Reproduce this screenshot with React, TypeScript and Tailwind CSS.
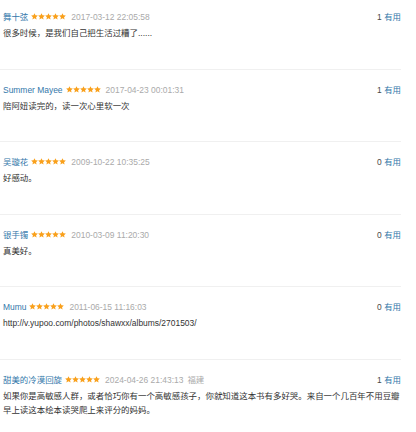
import React from 'react';

type Comment = {
  name: string;
  time: string;
  location?: string;
  votes: number;
  content: string;
};

const comments: Comment[] = [
  { name: '舞十弦', time: '2017-03-12 22:05:58', votes: 1, content: '很多时候，是我们自己把生活过糟了......' },
  { name: 'Summer Mayee', time: '2017-04-23 00:01:31', votes: 1, content: '陪阿妞读完的，读一次心里软一次' },
  { name: '吴璇花', time: '2009-10-22 10:35:25', votes: 0, content: '好感动。' },
  { name: '银手镯', time: '2010-03-09 11:20:30', votes: 0, content: '真美好。' },
  { name: 'Mumu', time: '2011-06-15 11:16:03', votes: 0, content: 'http://v.yupoo.com/photos/shawxx/albums/2701503/' },
  {
    name: '甜美的冷漠回旋',
    time: '2024-04-26 21:43:13',
    location: '福建',
    votes: 1,
    content:
      '如果你是高敏感人群，或者恰巧你有一个高敏感孩子，你就知道这本书有多好哭。来自一个几百年不用豆瓣早上读这本绘本读哭爬上来评分的妈妈。',
  },
];

const Star: React.FC = () => (
  <svg viewBox="1 1.5 22 21" className="w-[7px] h-[7px]">
    <path
      d="M12 1.5l3.1 6.9 7.4.7-5.6 5 1.7 7.4L12 17.6l-6.6 3.9 1.7-7.4-5.6-5 7.4-.7z"
      fill="#f9a01b"
    />
  </svg>
);

const Stars: React.FC = () => (
  <span className="inline-flex items-center mb-[1px]">
    <Star />
    <Star />
    <Star />
    <Star />
    <Star />
  </span>
);

const CommentItem: React.FC<{ c: Comment }> = ({ c }) => (
  <div className="border-b border-[#f0f0f0] pt-[13px] pb-[28px]">
    <div className="flex items-center justify-between leading-[14px] pl-[3px]">
      <div className="flex items-center">
        <span className="text-[#3377aa]">{c.name}</span>
        <span className="ml-[3px] mr-[5px] flex items-center">
          <Stars />
        </span>
        <span className="text-[#aaaaaa]">{c.time}</span>
        {c.location && <span className="text-[#aaaaaa] ml-[4px]">{c.location}</span>}
      </div>
      <div>
        <span className="text-[#494949]">{c.votes}</span>{' '}
        <span className="text-[#3377aa]">有用</span>
      </div>
    </div>
    <p className="mt-[2px] pl-[3px] leading-[14.5px] text-[#333333] break-all">{c.content}</p>
  </div>
);

export default function App() {
  return (
    <div
      className="bg-white w-[416px] h-[432px] overflow-hidden text-[8.45px]"
      style={{ fontFamily: '"Liberation Sans", "Noto Sans CJK SC", sans-serif' }}
    >
      <div className="w-[401px] -mt-[3px]">
        {comments.map((c, i) => (
          <CommentItem key={i} c={c} />
        ))}
      </div>
    </div>
  );
}
